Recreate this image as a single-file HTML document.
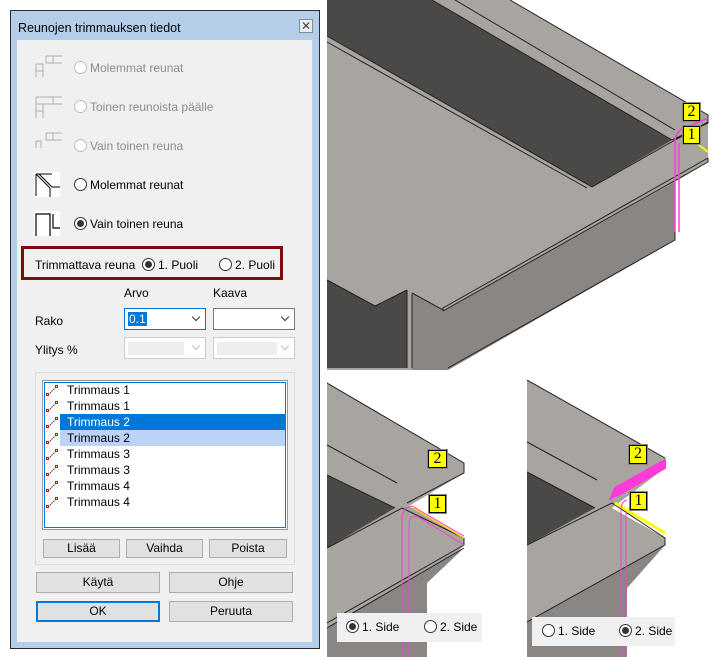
<!DOCTYPE html>
<html><head><meta charset="utf-8"><style>
*{box-sizing:border-box;margin:0;padding:0}
body{width:719px;height:657px;background:#fff;position:relative;overflow:hidden;font-family:"Liberation Sans",sans-serif;font-size:12px;color:#000}
.a{position:absolute}
.t{position:absolute;white-space:nowrap;line-height:14px}
.dis{color:#8d8d8d}
.rad{position:absolute;width:13px;height:13px;border:1px solid #333;border-radius:50%;background:#fff}
.rad.d{border-color:#bcbcbc}
.rad.on::after{content:"";position:absolute;left:2px;top:2px;width:7px;height:7px;border-radius:50%;background:#333}
.btn{position:absolute;background:#e1e1e1;border:1px solid #adadad;text-align:center;line-height:17px}
.combo{position:absolute;background:#fff;border:1px solid #7a7a7a}
.chev{position:absolute;right:6px;top:5px;width:6px;height:6px;border-right:1px solid #333;border-bottom:1px solid #333;transform:rotate(45deg)}
.item{position:absolute;left:60px;height:16px;width:225px;line-height:16px;padding-left:7px}
.lbl{position:absolute;background:#ff0;border:1px solid #000;outline:1px solid #888;font-family:"Liberation Serif",serif;font-size:16px;line-height:16px;text-align:center}
</style></head><body>
<!-- dialog -->
<div class="a" style="left:10px;top:10px;width:310px;height:639px;background:#b4cde8;border:1px solid #2b2b2b"></div>
<div class="t" style="left:18px;top:21px;font-size:12.5px">Reunojen trimmauksen tiedot</div>
<div class="a" style="left:299px;top:19px;width:14px;height:14px;border:1px solid #8a8a8a;background:#e8eef5;font-size:12px;line-height:12px;text-align:center;color:#444">✕</div>
<div class="a" style="left:17px;top:40px;width:295px;height:602px;background:#f0f0f0"></div>

<!-- icons -->
<svg class="a" style="left:33px;top:55px" width="30" height="190" fill="none" stroke-width="1">
<g stroke="#b0b0b0">
<path d="M3 9h7v13M3 9v13M3 16h7M13 1h16M13 1v7h16M20 1v7"/>
<path d="M3 42h26M3 42v21M3 49h7v14M3 56h7M3 42v7h26M20 42v7"/>
<path d="M3 86v7M3 86h5v7M13 78h16M13 78v7h16M20 78v7"/>
</g>
<rect x="1" y="117" width="26" height="25" fill="#fff"/>
<path d="M3 119h16M3 119v22M3 119l14 14M6 119l13 13M17 133v9M19 132h8" stroke="#000"/>
<rect x="1" y="156" width="26" height="25" fill="#fff"/>
<path d="M3 181v-22h14v22M20 159v14h7" stroke="#000" stroke-width="1.2"/>
</svg>
<div class="rad d" style="left:74px;top:61px"></div><div class="t dis" style="left:90px;top:61px">Molemmat reunat</div>
<div class="rad d" style="left:74px;top:100px"></div><div class="t dis" style="left:90px;top:100px">Toinen reunoista päälle</div>
<div class="rad d" style="left:74px;top:139px"></div><div class="t dis" style="left:90px;top:139px">Vain toinen reuna</div>
<div class="rad" style="left:74px;top:178px"></div><div class="t" style="left:90px;top:178px">Molemmat reunat</div>
<div class="rad on" style="left:74px;top:217px"></div><div class="t" style="left:90px;top:217px">Vain toinen reuna</div>

<div class="a" style="left:21px;top:246px;width:262px;height:34px;border:3px solid #7a0e0e"></div>
<div class="t" style="left:35px;top:258px">Trimmattava reuna</div>
<div class="rad on" style="left:142px;top:258px"></div><div class="t" style="left:158px;top:258px">1. Puoli</div>
<div class="rad" style="left:219px;top:258px"></div><div class="t" style="left:235px;top:258px">2. Puoli</div>

<div class="t" style="left:124px;top:286px">Arvo</div>
<div class="t" style="left:213px;top:286px">Kaava</div>
<div class="t" style="left:35px;top:314px">Rako</div>
<div class="combo" style="left:124px;top:308px;width:82px;height:22px;border-color:#0078d7"><span class="a" style="left:3px;top:3px;background:#0078d7;color:#fff;line-height:14px;padding:0 1px">0.1</span><div class="chev"></div></div>
<div class="combo" style="left:213px;top:308px;width:82px;height:22px"><div class="chev"></div></div>
<div class="t" style="left:35px;top:343px">Ylitys %</div>
<div class="combo" style="left:124px;top:337px;width:82px;height:22px;border-color:#ccc"><div class="a" style="left:3px;top:4px;width:56px;height:13px;background:#eee"></div><div class="chev" style="border-color:#bbb"></div></div>
<div class="combo" style="left:213px;top:337px;width:82px;height:22px;border-color:#ccc"><div class="a" style="left:3px;top:4px;width:60px;height:13px;background:#eee"></div><div class="chev" style="border-color:#bbb"></div></div>

<div class="a" style="left:35px;top:372px;width:260px;height:193px;border:1px solid #dcdcdc"></div>
<div class="a" style="left:42px;top:380px;width:246px;height:150px;border:1px solid #999;background:#fff"><div class="a" style="left:1px;top:1px;right:1px;bottom:1px;border:1px solid #0078d7"></div></div>
<div class="item" style="top:414px;background:#0078d7;color:#fff"></div>
<div class="item" style="top:430px;background:#bcd3f7"></div>
<div class="t" style="left:67px;top:383px">Trimmaus 1</div>
<div class="t" style="left:67px;top:399px">Trimmaus 1</div>
<div class="t" style="left:67px;top:415px;color:#fff">Trimmaus 2</div>
<div class="t" style="left:67px;top:431px">Trimmaus 2</div>
<div class="t" style="left:67px;top:447px">Trimmaus 3</div>
<div class="t" style="left:67px;top:463px">Trimmaus 3</div>
<div class="t" style="left:67px;top:479px">Trimmaus 4</div>
<div class="t" style="left:67px;top:495px">Trimmaus 4</div>
<svg class="a" style="left:46px;top:383px" width="14" height="130" fill="none" stroke-width="1">
<g stroke="#222" stroke-dasharray="1.5 1"><path d="M2 12l8-8M2 28l8-8M2 44l8-8M2 60l8-8M2 76l8-8M2 92l8-8M2 108l8-8M2 124l8-8"/></g>
<g stroke="#d00"><rect x="0.5" y="10.5" width="2" height="2"/><rect x="9.5" y="2.5" width="2" height="2"/><rect x="0.5" y="26.5" width="2" height="2"/><rect x="9.5" y="18.5" width="2" height="2"/><rect x="0.5" y="42.5" width="2" height="2"/><rect x="9.5" y="34.5" width="2" height="2"/><rect x="0.5" y="58.5" width="2" height="2"/><rect x="9.5" y="50.5" width="2" height="2"/><rect x="0.5" y="74.5" width="2" height="2"/><rect x="9.5" y="66.5" width="2" height="2"/><rect x="0.5" y="90.5" width="2" height="2"/><rect x="9.5" y="82.5" width="2" height="2"/><rect x="0.5" y="106.5" width="2" height="2"/><rect x="9.5" y="98.5" width="2" height="2"/><rect x="0.5" y="122.5" width="2" height="2"/><rect x="9.5" y="114.5" width="2" height="2"/></g>
</svg>
<div class="btn" style="left:43px;top:539px;width:77px;height:19px">Lisää</div>
<div class="btn" style="left:126px;top:539px;width:77px;height:19px">Vaihda</div>
<div class="btn" style="left:209px;top:539px;width:78px;height:19px">Poista</div>
<div class="btn" style="left:36px;top:572px;width:124px;height:21px;line-height:19px">Käytä</div>
<div class="btn" style="left:169px;top:572px;width:124px;height:21px;line-height:19px">Ohje</div>
<div class="btn" style="left:36px;top:601px;width:124px;height:21px;line-height:17px;border:2px solid #0078d7">OK</div>
<div class="btn" style="left:169px;top:601px;width:124px;height:21px;line-height:19px">Peruuta</div>

<!-- main 3D -->
<svg class="a" style="left:325px;top:0" width="394" height="370">
<rect x="2" y="0" width="392" height="370" fill="#a8a4a0"/>
<polygon points="185,0 394,0 394,370 123,370 350,240 350,182 383,162 383,115" fill="#fff"/>
<polygon points="123,370 350,240 350,182 118,311 87,294 87,370" fill="#8a8683"/>
<polygon points="2,0 107,0 347,140 267,187 2,36" fill="#4a4948"/>
<polygon points="2,280 50,306 82,290 82,368 2,368" fill="#4a4948"/>
<g stroke="#222" fill="none" stroke-width="1">
<path d="M185,0L383,115V123L347,140M107,0L347,140M130,0L350,130M2,36L267,187M2,42L262,188M267,187L350,140M383,158L118,308V311M383,158V162L118,311M383,122L350,140M2,280L50,306L82,290M87,293L118,310M350,182V240L123,368M82,290V368M87,294V368"/>
</g>
<g stroke="#ff3ad8" fill="none" stroke-width="1.5"><path d="M350,232V140Q352,130 360,128L383,118"/><path d="M354,232V143"/></g>
<path d="M366,139L383,152" stroke="#ff0" stroke-width="2"/>
</svg>
<div class="lbl" style="left:683px;top:103px;width:17px;height:18px">2</div>
<div class="lbl" style="left:683px;top:126px;width:17px;height:18px">1</div>

<!-- bottom left -->
<svg class="a" style="left:327px;top:378px" width="155" height="279">
<rect width="155" height="279" fill="#a8a4a0"/>
<polygon points="0,0 155,0 155,279 100,279 100,205 137,167 137,160 82,128 137,95 137,85 0,5" fill="#fff"/>
<polygon points="0,97 68,130 0,170" fill="#4a4948"/>
<polygon points="0,250 137,170 100,205 100,279 0,279" fill="#8a8683"/>
<g stroke="#222" fill="none"><path d="M0,5L137,85V95L80,125M0,67L70,105M0,97L68,130M0,170L75,130L137,160V167L0,245M0,250L137,170"/></g>
<g stroke="#ff3ad8" fill="none"><path d="M75,279V140Q75,130 85,128L137,158"/><path d="M82,279V145Q82,138 90,138L137,167"/></g>
<path d="M86,130L137,160" stroke="#fc0" stroke-width="1.5"/>
<rect x="10" y="235" width="145" height="29" fill="#f0f0f0"/>
</svg>
<div class="lbl" style="left:428px;top:450px;width:19px;height:18px">2</div>
<div class="lbl" style="left:429px;top:495px;width:17px;height:18px">1</div>
<div class="rad on" style="left:346px;top:620px"></div><div class="t" style="left:362px;top:620px">1. Side</div>
<div class="rad" style="left:424px;top:620px"></div><div class="t" style="left:440px;top:620px">2. Side</div>

<!-- bottom right -->
<svg class="a" style="left:527px;top:378px" width="192" height="279">
<rect width="150" height="279" fill="#a8a4a0"/>
<polygon points="0,0 192,0 192,279 100,279 100,210 138,167 138,160 85,130 138,90 138,80 0,2" fill="#fff"/>
<polygon points="0,94 68,130 0,167" fill="#4a4948"/>
<polygon points="0,244 138,167 100,210 100,279 0,279" fill="#8a8683"/>
<g stroke="#222" fill="none"><path d="M0,2L138,80M0,64L70,102M0,94L68,130M0,167L85,125L138,160V167L0,244"/></g>
<path d="M83,122L88,110L138,82V90L90,118" fill="#ff3ad8" stroke="#ff3ad8" stroke-width="2"/>
<path d="M88,125L138,155" stroke="#ff0" stroke-width="3"/>
<g stroke="#ff3ad8" fill="none"><path d="M94,279V130Q95,123 100,122"/><path d="M99,279V133"/></g>
<rect x="5" y="239" width="143" height="29" fill="#f0f0f0"/>
</svg>
<div class="lbl" style="left:629px;top:445px;width:18px;height:19px">2</div>
<div class="lbl" style="left:630px;top:492px;width:17px;height:18px">1</div>
<div class="rad" style="left:542px;top:624px"></div><div class="t" style="left:558px;top:624px">1. Side</div>
<div class="rad on" style="left:619px;top:624px"></div><div class="t" style="left:635px;top:624px">2. Side</div>
</body></html>
